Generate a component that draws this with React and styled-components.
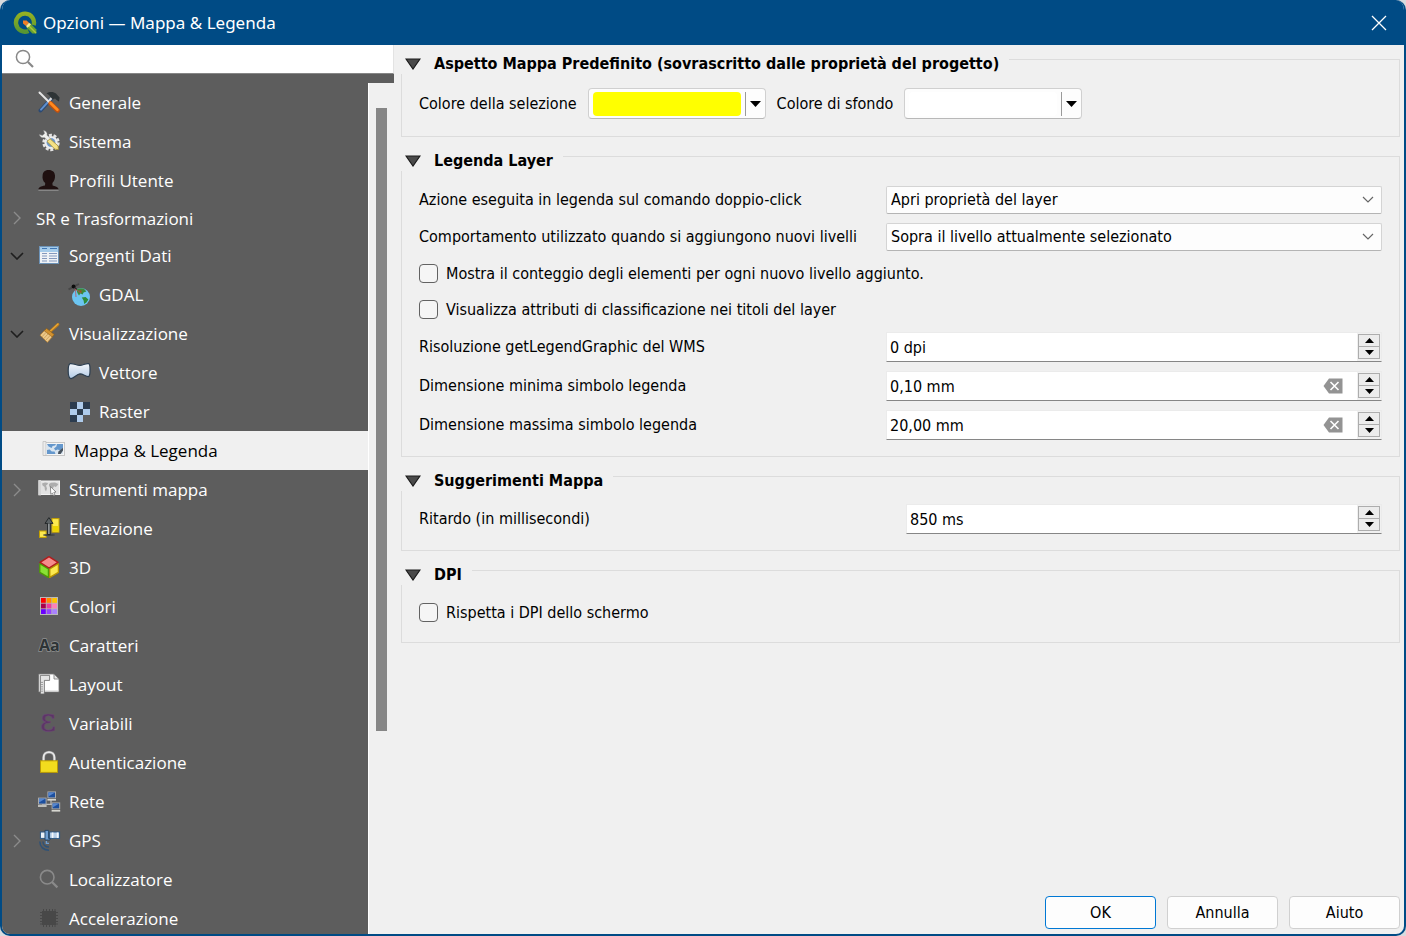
import { useState } from "react";
import styled, { createGlobalStyle } from "styled-components";

const App = () => {
  const [selected, setSelected] = useState("mappa");
  return (
    <>
      <GlobalStyle />
      <StWindow>
        <StTitleBar>
          <QgisLogo />
          <StTitle>Opzioni — Mappa &amp; Legenda</StTitle>
          <StClose aria-label="Chiudi">
            <svg width="16" height="16" viewBox="0 0 16 16">
              <path d="M1 1 15 15M15 1 1 15" stroke="#fff" strokeWidth="1.3" />
            </svg>
          </StClose>
        </StTitleBar>
        <StContent>
          <StSidebar>
            <StSearch>
              <svg width="20" height="20" viewBox="0 0 20 20">
                <circle cx="9" cy="8" r="6.6" fill="none" stroke="#888" strokeWidth="1.5" />
                <path d="M14 13 19 18" stroke="#888" strokeWidth="2.2" />
              </svg>
              <StSearchInput type="text" aria-label="Cerca" />
            </StSearch>
            <StTree>
              <StTreeList>
                {items.map((item) => (
                  <StTreeRow
                    key={item.id}
                    $level={item.level}
                    $short={!item.icon}
                    $selected={item.id === selected}
                  >
                    {item.state ? (
                      <StToggle aria-label={`Espandi ${item.label}`}>
                        <Chevron open={item.state === "open"} />
                      </StToggle>
                    ) : (
                      <StToggleSpace />
                    )}
                    <StEntry onClick={() => setSelected(item.id)}>
                      {item.icon && (
                        <StIcon width="23" height="23" viewBox="0 0 23 23">
                          {item.icon}
                        </StIcon>
                      )}
                      {item.label}
                    </StEntry>
                  </StTreeRow>
                ))}
              </StTreeList>
              <StScrollbar>
                <StThumb />
              </StScrollbar>
            </StTree>
          </StSidebar>

          <StPanel>
            <StGroups>
              <Group title="Aspetto Mappa Predefinito (sovrascritto dalle proprietà del progetto)">
                <StColorRow>
                  <label htmlFor="selezione">Colore della selezione</label>
                  <ColorButton id="selezione" color="#ffff00" />
                  <label htmlFor="sfondo">Colore di sfondo</label>
                  <ColorButton id="sfondo" color="#ffffff" />
                </StColorRow>
              </Group>

              <Group title="Legenda Layer">
                <StForm $labels="467px" $top="15px">
                  <label htmlFor="azione">
                    Azione eseguita in legenda sul comando doppio-click
                  </label>
                  <Combo
                    id="azione"
                    options={["Apri proprietà del layer", "Apri tabella degli attributi"]}
                  />
                  <label htmlFor="comportamento">
                    Comportamento utilizzato quando si aggiungono nuovi livelli
                  </label>
                  <Combo
                    id="comportamento"
                    options={["Sopra il livello attualmente selezionato"]}
                  />
                  <Check>Mostra il conteggio degli elementi per ogni nuovo livello aggiunto.</Check>
                  <Check>Visualizza attributi di classificazione nei titoli del layer</Check>
                  <label htmlFor="wms">Risoluzione getLegendGraphic del WMS</label>
                  <Spin id="wms" value="0 dpi" />
                  <label htmlFor="minima">Dimensione minima simbolo legenda</label>
                  <Spin id="minima" value="0,10 mm" clearable />
                  <label htmlFor="massima">Dimensione massima simbolo legenda</label>
                  <Spin id="massima" value="20,00 mm" clearable />
                </StForm>
              </Group>

              <Group title="Suggerimenti Mappa">
                <StForm $labels="487px" $top="13px">
                  <label htmlFor="ritardo">Ritardo (in millisecondi)</label>
                  <Spin id="ritardo" value="850 ms" />
                </StForm>
              </Group>

              <Group title="DPI">
                <StForm $labels="467px" $top="14px">
                  <Check>Rispetta i DPI dello schermo</Check>
                </StForm>
              </Group>
            </StGroups>
            <StFooter>
              <StButton $primary>OK</StButton>
              <StButton>Annulla</StButton>
              <StButton>Aiuto</StButton>
            </StFooter>
          </StPanel>
        </StContent>
      </StWindow>
    </>
  );
};

export default App;

const Group = ({ title, children }) => (
  <StGroup>
    <StGroupTitle>
      <svg width="16" height="12" viewBox="0 0 16 12">
        <path d="M1 1H15L8 11Z" fill="#4a4a4a" stroke="#1a1a1a" strokeWidth="1.2" />
      </svg>
      {title}
    </StGroupTitle>
    {children}
  </StGroup>
);

const ColorButton = ({ id, color }) => (
  <StColorButton id={id}>
    <StSwatch $color={color} />
    <StColorArrow>
      <svg width="11" height="6" viewBox="0 0 11 6">
        <path d="M0 0H11L5.5 6Z" fill="#000" />
      </svg>
    </StColorArrow>
  </StColorButton>
);

const Combo = ({ id, options }) => (
  <StCombo>
    <StSelect id={id}>
      {options.map((option) => (
        <option key={option}>{option}</option>
      ))}
    </StSelect>
    <StComboArrow width="12" height="7" viewBox="0 0 12 7">
      <path d="M1 1 6 6 11 1" fill="none" stroke="#666" strokeWidth="1.2" />
    </StComboArrow>
  </StCombo>
);

const Check = ({ children }) => (
  <StCheck>
    <StCheckbox type="checkbox" />
    {children}
  </StCheck>
);

const Spin = ({ id, value, clearable }) => (
  <StSpin>
    <StSpinInput id={id} type="text" defaultValue={value} />
    {clearable && (
      <StClear aria-label="Cancella">
        <svg width="20" height="16" viewBox="0 0 20 16">
          <path d="M0.5 8 6 0.5H19.5V15.5H6Z" fill="#939393" />
          <path d="M7.5 4 15.5 12M15.5 4 7.5 12" stroke="#fff" strokeWidth="1.6" />
        </svg>
      </StClear>
    )}
    <StSteps>
      <StStep aria-label="Aumenta">
        <svg width="9" height="5" viewBox="0 0 9 5">
          <path d="M0 5 4.5 0 9 5Z" />
        </svg>
      </StStep>
      <StStep aria-label="Diminuisci">
        <svg width="9" height="5" viewBox="0 0 9 5">
          <path d="M0 0 4.5 5 9 0Z" />
        </svg>
      </StStep>
    </StSteps>
  </StSpin>
);

const Chevron = ({ open }) =>
  open ? (
    <svg width="14" height="8" viewBox="0 0 14 8">
      <path d="M1 1 7 7 13 1" fill="none" stroke="#1e1e1e" strokeWidth="1.6" />
    </svg>
  ) : (
    <svg width="8" height="14" viewBox="0 0 8 14">
      <path d="M1 1 7 7 1 13" fill="none" stroke="#8c8c8c" strokeWidth="1.4" />
    </svg>
  );

const QgisLogo = () => (
  <svg width="24" height="24" viewBox="0 0 24 24">
    <defs>
      <linearGradient id="ring" x1="0" y1="0" x2="0" y2="1">
        <stop offset="0" stopColor="#93b023" />
        <stop offset="1" stopColor="#589632" />
      </linearGradient>
    </defs>
    <path
      d="M15.5 19.9A9 9 0 1 1 20.6 14.2"
      fill="none"
      stroke="url(#ring)"
      strokeWidth="4.4"
    />
    <path d="M13 16 17 12 23.4 18.6V22.4H19.4Z" fill="#6aa32f" />
    <path d="M15 14 23 22" stroke="#a9c53c" strokeWidth="1.4" />
    <path d="M10 9.4H13.6L16 11.8 13 15 10 12.4Z" fill="#f07e26" />
    <path d="M13 15 16 11.8 18 13.6 14.6 16.8Z" fill="#f7e99a" />
  </svg>
);

const colors = [
  ["#ff0000", "#ff8c00", "#ffc400"],
  ["#a8004c", "#ee3a9c", "#ff80b8"],
  ["#6a00ff", "#9645ff", "#a982ff"],
];

const items = [
  {
    id: "generale",
    label: "Generale",
    icon: (
      <>
        <path d="M2.5 19.5 13 8" stroke="#2c4a73" strokeWidth="4" strokeLinecap="round" />
        <path d="M3 18.6 10 11" stroke="#5f8fce" strokeWidth="2" strokeLinecap="round" />
        <path d="M10 11 14.5 6" stroke="#d8d8d8" strokeWidth="2.4" />
        <path d="M8.5 2.4C11.5 0.4 16 0.6 18 2.6L21.6 6.4 21 10.4 18.6 9 17 7.4 14.8 8.4 12 5.4C11.4 3.8 10 3 8.5 2.4Z" fill="#2e3436" />
        <path d="M1.5 1.5 12 12" stroke="#e6e6e6" strokeWidth="2" strokeLinecap="round" />
        <path d="M12.5 12.5 19.6 19.4" stroke="#c4500c" strokeWidth="4.6" strokeLinecap="round" />
        <path d="M12.5 12 19.4 18.8" stroke="#ff8a1e" strokeWidth="2.6" strokeLinecap="round" />
      </>
    ),
  },
  {
    id: "sistema",
    label: "Sistema",
    icon: (
      <>
        <circle cx="13" cy="12.5" r="7.4" fill="none" stroke="#e4e4e4" strokeWidth="2.6" strokeDasharray="3 1.65" />
        <circle cx="13" cy="12.5" r="5.6" fill="#a9c3e2" stroke="#ededed" strokeWidth="2" />
        <circle cx="13" cy="12.5" r="4.2" fill="#6c95c7" />
        <path d="M1.4 4.6C1.6 7 4.4 8.4 6.6 7.4L11 12 13.4 9.6 9 5.2C9.6 2.8 8 0.8 5.6 0.6L6.6 3.6 4.4 5.4Z" fill="#f0f0ee" stroke="#8d8d8d" strokeWidth="0.5" />
        <path d="M9 11.5 12 8.8 20.2 16 20.4 19.6 17 19.2Z" fill="#f5e184" stroke="#a58f38" strokeWidth="0.8" />
      </>
    ),
  },
  {
    id: "profili",
    label: "Profili Utente",
    icon: (
      <>
        <path d="M0.4 20.6C0.6 18 2.6 17.2 7 16.4L7.2 14C4.8 12 4.2 9 4.6 6.4 4.8 2.6 7.4 1 10.8 1 14.6 1 16.8 3.2 17 6.6 17.2 9.6 16.2 12.4 14.4 14L14.6 16.4C18.2 17.2 20.4 18 20.6 20.6Z" fill="#1f1010" />
        <path d="M0.4 21.2H20.6" stroke="#a8a8a8" strokeWidth="0.8" />
      </>
    ),
  },
  { id: "sr", label: "SR e Trasformazioni", state: "closed" },
  {
    id: "sorgenti",
    label: "Sorgenti Dati",
    state: "open",
    icon: (
      <>
        <rect x="1.5" y="2.5" width="19" height="17" fill="#eef2f6" stroke="#6d93b8" />
        <rect x="2" y="3" width="18" height="5" fill="#a4cbea" />
        <path d="M4 4.5H9M12 4.5H19" stroke="#3f77b5" strokeWidth="1" />
        <path d="M4 9.5H9M4 12H9M4 14.5H9M4 17H9M11 9.5H19M11 12H19M11 14.5H19M11 17H19" stroke="#8398bd" strokeWidth="1" />
      </>
    ),
  },
  {
    id: "gdal",
    label: "GDAL",
    level: 1,
    icon: (
      <>
        <circle cx="13" cy="14" r="9" fill="#6cc5f2" />
        <path d="M8.4 6.4C11 5 14 4.8 16 5.8L18.4 8.4 15.6 9.4 14.6 11.6 12.4 10.4 11 12.4 9.4 10Z" fill="#3c8a3d" />
        <path d="M13.8 14.4 17.6 14 20.4 16.4 18.4 19.4 16.2 21 15.6 17.6Z" fill="#2f8c3a" />
        <path d="M11 7.4 13.4 7 14 9.4 11.6 9.6Z" fill="#8c5a2e" />
        <path d="M7.4 6 8 14M7.4 6 13 10" stroke="#c8434b" strokeWidth="0.7" />
        <path d="M0.5 6.4 4 4.6M7.6 2.6 11 1" stroke="#474747" strokeWidth="1.8" />
        <circle cx="5.6" cy="3.6" r="2" fill="#0c0c0c" />
        <path d="M6 4 9 6.4" stroke="#1c1c1c" strokeWidth="1" />
      </>
    ),
  },
  {
    id: "visualizzazione",
    label: "Visualizzazione",
    state: "open",
    icon: (
      <>
        <path d="M11.6 10 20 2.4" stroke="#b87a1c" strokeWidth="2.8" strokeLinecap="round" />
        <path d="M12 9.4 20 2" stroke="#eaa938" strokeWidth="1.2" strokeLinecap="round" />
        <path d="M8.6 6.4 16.2 12.4 14.2 15 6.2 8.8Z" fill="#d1912f" stroke="#8f5c10" strokeWidth="0.6" />
        <path d="M6.2 8.8 14.2 15 9.4 20.4 2 13.2Z" fill="#ecc88a" stroke="#a97326" strokeWidth="0.7" />
        <path d="M8 10.4 4 14.8M10 12 5.8 16.6M12 13.6 7.6 18.4" stroke="#c79a52" strokeWidth="0.8" />
      </>
    ),
  },
  {
    id: "vettore",
    label: "Vettore",
    level: 1,
    icon: (
      <>
        <defs>
          <linearGradient id="poly" x1="0" y1="0" x2="0" y2="1">
            <stop offset="0" stopColor="#f4f7fb" />
            <stop offset="1" stopColor="#b3cbe6" />
          </linearGradient>
        </defs>
        <path
          d="M2 2.6C6 2.2 8.6 4.6 12 4.4 15 4.2 17.6 2.2 20.6 2.6 22.2 3.6 22 6 22 8.6 22 11.6 22.2 14.6 20.6 15.6 17.4 15.6 15.2 12.8 12 12.8 8.6 13 6.4 17.2 3 17.6 0.6 17.2 0.2 13.4 0.2 10 0.2 7 0.4 3.4 2 2.6Z"
          fill="url(#poly)"
          stroke="#2c3e50"
          strokeWidth="1.2"
        />
      </>
    ),
  },
  {
    id: "raster",
    label: "Raster",
    level: 1,
    icon: (
      <>
        <path d="M2 2H9V9H2ZM15 2H22V9H15ZM9 9H15V15H9ZM2 15H9V22H2Z" fill="#2b3b4e" />
        <path d="M9 2H15V9H9ZM2 9H9V15H2ZM15 9H22V15H15ZM9 15H15V22H9Z" fill="#aecbeb" />
      </>
    ),
  },
  {
    id: "mappa",
    label: "Mappa & Legenda",
    icon: (
      <>
        <rect x="1" y="3.5" width="20.5" height="13" fill="#f6f6f6" stroke="#c6c6c6" />
        <path d="M0 2.5H3V16.5H0Z" fill="#ececec" stroke="#bcbcbc" strokeWidth="0.7" />
        <rect x="3.5" y="5" width="16.5" height="10" fill="#d9e5f0" />
        <path d="M4 5H13L12 6.6 9.6 7 8.6 9 5.6 7.4ZM14 5H20V9L17.4 11.4 14.6 10.6 12.4 11.6 11 9.4 13.4 7.4ZM4 15V11L6.6 10.4 8.8 12.4 11.6 12.6 12.4 15Z" fill="#6497cc" />
        <path d="M15 15 15.4 12.4 20 8.8V11.6L17.6 15Z" fill="#48535e" />
      </>
    ),
  },
  {
    id: "strumenti",
    label: "Strumenti mappa",
    state: "closed",
    icon: (
      <>
        <rect x="1" y="3" width="20.5" height="13.5" fill="#e2e2e2" stroke="#f2f2f2" />
        <path d="M0.4 2H3V17.4H0.4Z" fill="#d4d4d4" />
        <path d="M4 5.4 7 4.6 10 5 9.4 6.6 8 7.6 9 10.4 8 13.4 6.8 11.4 6.6 9 4.6 7.4ZM11 6 13 4.8 17 4.6 20.4 6 19.4 7.4 17.8 9 16 8.2 14.6 11 13 11.4 12.4 9.4 11 8Z" fill="#adadad" />
        <path d="M12.4 8.6 18 14 15.8 14.4 17 17.2 15.6 17.8 14.4 15.2 12.8 16.4Z" fill="#fff" stroke="#666" strokeWidth="0.7" />
      </>
    ),
  },
  {
    id: "elevazione",
    label: "Elevazione",
    icon: (
      <>
        <rect x="14" y="1.6" width="7" height="13.6" fill="#fce94f" stroke="#c4a000" />
        <path d="M15 9H20.5V14.7H15Z" fill="#edd400" />
        <rect x="1.5" y="14" width="6.6" height="6.4" fill="#fce94f" stroke="#c4a000" />
        <ellipse cx="11" cy="18" rx="6" ry="1.1" fill="#3f4446" />
        <path d="M9.6 17.6V6.4H7L10.9 0.6 15 6.4H12.2V17.6Z" fill="#5b6163" stroke="#1d2123" strokeWidth="0.9" />
        <path d="M10.9 17V7" stroke="#b4b8ba" strokeWidth="1" />
      </>
    ),
  },
  {
    id: "3d",
    label: "3D",
    icon: (
      <>
        <path d="M11 0.6 20 6.4 11 12.2 2 6.4Z" fill="#f58c8c" stroke="#b01c1c" strokeWidth="1.4" strokeLinejoin="round" />
        <path d="M1.8 7.8 10.4 13V21.4L1.8 16.4Z" fill="#8ae234" stroke="#4e9a06" strokeWidth="1.3" strokeLinejoin="round" />
        <path d="M20.4 7.8 11.8 13V21.4L20.4 16.4Z" fill="#fce94f" stroke="#b89400" strokeWidth="1.3" strokeLinejoin="round" />
      </>
    ),
  },
  {
    id: "colori",
    label: "Colori",
    icon: (
      <>
        <rect x="2" y="2" width="18" height="18" fill="#b9b9b9" />
        {colors.map((row, y) =>
          row.map((fill, x) => (
            <rect key={fill} x={3 + x * 5.6} y={3 + y * 5.6} width="4.8" height="4.8" fill={fill} />
          ))
        )}
      </>
    ),
  },
  {
    id: "caratteri",
    label: "Caratteri",
    icon: (
      <text
        x="1"
        y="17"
        fontFamily="Open Sans, sans-serif"
        fontSize="16"
        fontWeight="700"
        fill="#2e3436"
        stroke="#8f9190"
        strokeWidth="1.4"
        paintOrder="stroke"
      >
        Aa
      </text>
    ),
  },
  {
    id: "layout",
    label: "Layout",
    icon: (
      <>
        <path d="M0.8 1H16L21 6V19H0.8Z" fill="#fff" stroke="#777" strokeWidth="0.8" />
        <path d="M16 1V6H21Z" fill="#e6e6e6" stroke="#777" strokeWidth="0.8" />
        <path d="M7 18H20" stroke="#cfcfcf" />
        <path d="M2.4 2.4H11.6V7.4H6.4V21H2.4Z" fill="#e4e4e4" stroke="#666" strokeWidth="0.8" />
        <path d="M2.6 9.4H5M2.6 11.6H5M2.6 13.8H5M2.6 16H5M2.6 18.2H5" stroke="#888" strokeWidth="0.8" />
      </>
    ),
  },
  {
    id: "variabili",
    label: "Variabili",
    icon: (
      <text
        x="2"
        y="19"
        fontFamily="DejaVu Serif, Liberation Serif, serif"
        fontSize="31"
        fill="#5c3566"
        stroke="#6d4677"
        strokeWidth="0.5"
      >
        ε
      </text>
    ),
  },
  {
    id: "autenticazione",
    label: "Autenticazione",
    icon: (
      <>
        <path d="M5.6 10V6.4C5.6 -0.6 16.4 -0.6 16.4 6.4V10" fill="none" stroke="#8d8d8d" strokeWidth="3" />
        <path d="M5.6 10V6.4C5.6 -0.6 16.4 -0.6 16.4 6.4V10" fill="none" stroke="#e9e9e9" strokeWidth="1.8" />
        <rect x="2.5" y="9.8" width="17" height="11.6" fill="#f2dc1e" stroke="#b89a06" />
      </>
    ),
  },
  {
    id: "rete",
    label: "Rete",
    icon: (
      <>
        <path d="M13 10V15M4 14.4H16" stroke="#bdbdbd" strokeWidth="1.2" fill="none" />
        {[
          [0, 7.6],
          [9.4, 1.4],
          [13.6, 12.4],
        ].map(([x, y]) => (
          <g key={x} transform={`translate(${x} ${y})`}>
            <rect x="0.5" y="0.5" width="7.6" height="6" fill="#1d4f9e" stroke="#a9a9a9" />
            <path d="M1 1H7.6L1 5Z" fill="#5787cf" />
            <rect x="0" y="7.6" width="8.6" height="1.6" fill="#d6d6d0" />
          </g>
        ))}
      </>
    ),
  },
  {
    id: "gps",
    label: "GPS",
    state: "closed",
    icon: (
      <>
        <rect x="2.4" y="3" width="5" height="6.4" fill="#eaf1f8" stroke="#2d5986" />
        <rect x="11.6" y="3" width="10" height="6.4" fill="#b8d0ea" stroke="#2d5986" />
        <path d="M14.6 3.5V9M19.6 3.5V9" stroke="#f3f7fb" strokeWidth="1.6" />
        <path d="M7 1.4H10.6V9.4H12V11H7Z" fill="#6f9fd2" stroke="#1f4468" strokeWidth="0.9" />
        <path d="M1.8 12.6C1.8 17.8 5.6 21.2 11 21.2M5 12.6C5 16 7.6 18 11 18" fill="none" stroke="#2f5277" strokeWidth="1.5" />
        <path d="M8.4 12V14.4H11" fill="none" stroke="#6f9fd2" strokeWidth="1.4" />
      </>
    ),
  },
  {
    id: "localizzatore",
    label: "Localizzatore",
    icon: (
      <>
        <circle cx="9.2" cy="9.2" r="6.8" fill="none" stroke="#8a8a8a" strokeWidth="1.6" />
        <path d="M14 14 19.4 19.4" stroke="#8a8a8a" strokeWidth="2.2" />
      </>
    ),
  },
  {
    id: "accelerazione",
    label: "Accelerazione",
    icon: (
      <>
        <rect x="4" y="4" width="14" height="14" fill="#484848" />
        <path d="M5.5 2V20M8.5 2V20M11.5 2V20M14.5 2V20M17 2V20M2 5.5H20M2 8.5H20M2 11.5H20M2 14.5H20M2 17H20" stroke="#484848" strokeWidth="1" />
      </>
    ),
  },
];

const GlobalStyle = createGlobalStyle`
  * {
    box-sizing: border-box;
  }

  body {
    margin: 0;
    background-color: #d9dbde;
    font-family: "DejaVu Sans Condensed", "DejaVu Sans", sans-serif;
    font-size: 16px;
    line-height: 20px;
    color: #000;
  }

  button,
  input,
  select {
    font: inherit;
    color: inherit;
  }

  button {
    padding: 0;
    border: none;
    background: none;
  }

  svg {
    display: block;
    flex-shrink: 0;
  }
`;

const StWindow = styled.div`
  height: 100vh;
  display: flex;
  flex-direction: column;
  overflow: hidden;
  border: 2px solid #004b85;
  border-top: none;
  border-radius: 10px;
  background-color: #f0f0f0;
`;

const StTitleBar = styled.header`
  flex: 0 0 45px;
  display: flex;
  align-items: center;
  gap: 6px;
  padding: 0 17px 0 11px;
  background-color: #004b85;
  color: #fff;
`;

const StTitle = styled.h1`
  flex: 1;
  margin: 0;
  font: 400 17px/24px "Noto Sans", sans-serif;
`;

const StClose = styled.button`
  cursor: pointer;
`;

const StContent = styled.div`
  flex: 1;
  min-height: 0;
  display: flex;
`;

const StSidebar = styled.nav`
  flex: 0 0 392px;
  display: flex;
  flex-direction: column;
`;

const StSearch = styled.div`
  flex: 0 0 29px;
  display: flex;
  align-items: center;
  gap: 6px;
  padding: 0 8px 0 12px;
  border-right: 1px solid #e3e3e3;
  border-bottom: 1px solid #868686;
  background-color: #fff;
`;

const StSearchInput = styled.input`
  flex: 1;
  border: none;
  outline: none;
  background: none;
`;

const StTree = styled.div`
  flex: 1;
  min-height: 0;
  display: flex;
  overflow: hidden;
  border-top: 9px solid #5d5d5d;
`;

const StTreeList = styled.ul`
  flex: 1;
  margin: 0;
  padding: 0;
  list-style: none;
  background-color: #5d5d5d;
`;

const StTreeRow = styled.li`
  height: ${({ $short }) => ($short ? 36 : 39)}px;
  display: flex;
  align-items: center;
  gap: 9px;
  padding-left: ${({ $level, $selected }) => 5 + ($level ? 30 : 0) + ($selected ? 5 : 0)}px;
  background-color: ${({ $selected }) => ($selected ? "#f0f0f0" : "transparent")};
  color: ${({ $selected }) => ($selected ? "#000" : "#fff")};
`;

const StToggle = styled.button`
  width: 20px;
  height: 20px;
  display: flex;
  align-items: center;
  justify-content: center;
`;

const StToggleSpace = styled.span`
  width: 20px;
`;

const StEntry = styled.button`
  flex: 1;
  display: flex;
  align-items: center;
  gap: 8px;
  font: 400 17px/23px "Open Sans", sans-serif;
  text-align: left;
`;

const StIcon = styled.svg`
  margin-left: 2px;
  overflow: visible;
`;

const StScrollbar = styled.div`
  flex: 0 0 26px;
  padding: 25px 7px 0;
  border-left: 1px solid #fff;
`;

const StThumb = styled.div`
  width: 11px;
  height: 76%;
  max-height: 623px;
  background-color: #868686;
`;

const StPanel = styled.main`
  flex: 1;
  display: flex;
  flex-direction: column;
  justify-content: space-between;
  padding: 14px 4px 5px 7px;
`;

const StGroups = styled.div`
  display: flex;
  flex-direction: column;
  gap: 19px;
`;

const StGroup = styled.section`
  border: 1px solid #dcdcdc;
`;

const StGroupTitle = styled.h2`
  width: fit-content;
  height: 22px;
  display: flex;
  align-items: center;
  gap: 13px;
  margin: -8px 0 0 -1px;
  padding: 2px 10px 0 4px;
  background-color: #f0f0f0;
  font-size: 16px;
  font-weight: 700;
  line-height: 20px;
`;

const StColorRow = styled.div`
  display: flex;
  align-items: center;
  gap: 11px;
  padding: 14px 17px 17px;
`;

const StColorButton = styled.button`
  width: 178px;
  height: 31px;
  display: flex;
  align-items: center;
  gap: 4px;
  padding: 0 4px;
  border: 1px solid #d0d0d0;
  border-bottom-color: #b8b8b8;
  border-radius: 4px;
  background-color: #fdfdfd;
`;

const StSwatch = styled.span`
  flex: 1;
  height: 24px;
  border-radius: 4px;
  background-color: ${({ $color }) => $color};
`;

const StColorArrow = styled.span`
  height: 24px;
  display: flex;
  align-items: center;
  padding-left: 4px;
  border-left: 1px solid #9a9a9a;
`;

const StForm = styled.div`
  display: grid;
  grid-template-columns: ${({ $labels }) => $labels} 1fr;
  row-gap: 9px;
  align-items: center;
  padding: ${({ $top }) => $top} 17px 16px;
`;

const StCombo = styled.div`
  position: relative;
  height: 28px;
`;

const StSelect = styled.select`
  width: 100%;
  height: 100%;
  appearance: none;
  padding: 0 28px 0 4px;
  border: 1px solid #d4d4d4;
  border-bottom-color: #b4b4b4;
  border-radius: 2px;
  background-color: #fdfdfd;
`;

const StComboArrow = styled.svg`
  position: absolute;
  top: 10px;
  right: 8px;
  pointer-events: none;
`;

const StCheck = styled.label`
  grid-column: 1 / -1;
  height: 27px;
  display: flex;
  align-items: center;
  gap: 8px;
`;

const StCheckbox = styled.input`
  width: 19px;
  height: 19px;
  appearance: none;
  margin: 0;
  border: 1px solid #626262;
  border-radius: 4px;
  background-color: #f5f5f5;

  &:checked {
    background-color: #0067c0;
  }
`;

const StSpin = styled.div`
  height: 30px;
  display: flex;
  align-items: center;
  border: 1px solid #ebebeb;
  border-bottom-color: #868686;
  background-color: #fff;
`;

const StSpinInput = styled.input`
  flex: 1;
  min-width: 0;
  padding: 2px 3px 0;
  border: none;
  outline: none;
  background: none;
`;

const StClear = styled.button`
  margin-right: 14px;
`;

const StSteps = styled.div`
  height: 28px;
  display: flex;
  flex-direction: column;
  justify-content: center;
  padding: 0 1px 2px;
  background-color: #f0f0f0;
`;

const StStep = styled.button`
  width: 22px;
  height: 13px;
  display: flex;
  align-items: center;
  justify-content: center;
  border: 1px solid #adadad;
  background-color: #ececec;

  & + & {
    margin-top: -1px;
  }
`;

const StFooter = styled.footer`
  display: flex;
  justify-content: flex-end;
  gap: 11px;
`;

const StButton = styled.button`
  width: 111px;
  height: 33px;
  border: 1px solid ${({ $primary }) => ($primary ? "#0078d4" : "#d0d0d0")};
  border-radius: 4px;
  background-color: #fdfdfd;
`;
